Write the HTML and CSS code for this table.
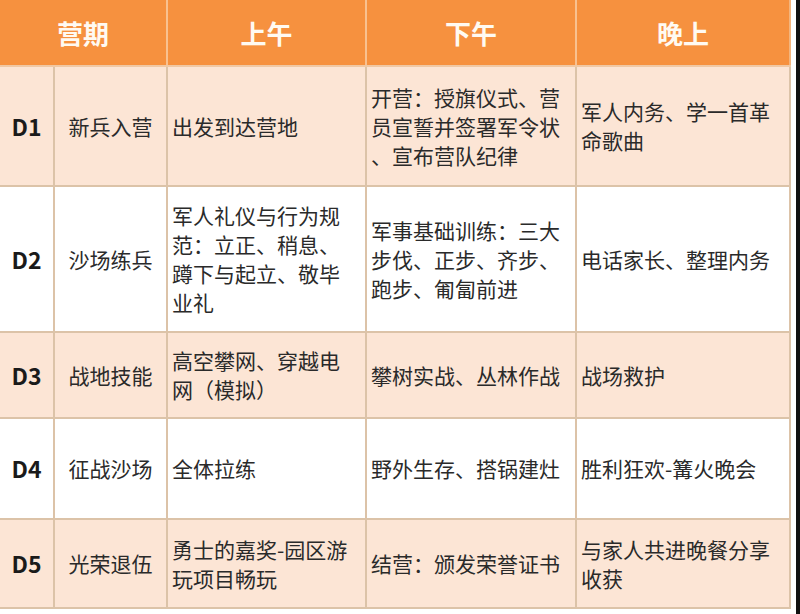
FILE: index.html
```html
<!DOCTYPE html>
<html lang="zh-CN">
<head>
<meta charset="utf-8">
<title>营期安排</title>
<link rel="stylesheet" href="styles.css">
</head>
<body>
<div class="page">
  <table class="schedule">
    <colgroup>
      <col class="c-day"><col class="c-theme"><col class="c-am"><col class="c-pm"><col class="c-eve">
    </colgroup>
    <thead>
      <tr class="head">
        <th colspan="2">营期</th>
        <th>上午</th>
        <th>下午</th>
        <th>晚上</th>
      </tr>
    </thead>
    <tbody>
      <tr class="r1 tint">
        <td class="day">D1</td>
        <td class="theme">新兵入营</td>
        <td>出发到达营地</td>
        <td>开营：授旗仪式、营员宣誓并签署军令状、宣布营队纪律</td>
        <td>军人内务、学一首革命歌曲</td>
      </tr>
      <tr class="r2">
        <td class="day">D2</td>
        <td class="theme">沙场练兵</td>
        <td>军人礼仪与行为规范：立正、稍息、蹲下与起立、敬毕业礼</td>
        <td>军事基础训练：三大步伐、正步、齐步、跑步、匍匐前进</td>
        <td>电话家长、整理内务</td>
      </tr>
      <tr class="r3 tint">
        <td class="day">D3</td>
        <td class="theme">战地技能</td>
        <td>高空攀网、穿越电网（模拟）</td>
        <td>攀树实战、丛林作战</td>
        <td>战场救护</td>
      </tr>
      <tr class="r4">
        <td class="day">D4</td>
        <td class="theme">征战沙场</td>
        <td>全体拉练</td>
        <td>野外生存、搭锅建灶</td>
        <td>胜利狂欢-篝火晚会</td>
      </tr>
      <tr class="r5 tint">
        <td class="day">D5</td>
        <td class="theme">光荣退伍</td>
        <td>勇士的嘉奖-园区游玩项目畅玩</td>
        <td>结营：颁发荣誉证书</td>
        <td>与家人共进晚餐分享收获</td>
      </tr>
    </tbody>
  </table>
  <div class="edge"></div>
</div>
</body>
</html>
```
FILE: styles.css
```css
html, body {
  margin: 0;
  padding: 0;
  background: #ffffff;
}

.page {
  width: 800px;
  height: 614px;
  display: flex;
  justify-content: space-between;
  align-items: flex-start;
  overflow: hidden;
}

.schedule {
  width: 790px;
  border-collapse: collapse;
  table-layout: fixed;
  font-family: "Noto Sans CJK SC", "Noto Sans", sans-serif;
  color: #2a2a2a;
}

.c-day { width: 54px; }
.c-theme { width: 113px; }
.c-am { width: 199px; }
.c-pm { width: 210px; }
.c-eve { width: 214px; }

.head {
  height: 66px;
  background: #f6913f;
}

.head th {
  color: #fffaf2;
  font-size: 26px;
  font-weight: 700;
  border-left: 2px solid #f9c190;
  border-right: 2px solid #f9c190;
  border-bottom: 2px solid #f0c8a4;
  padding: 0;
  line-height: 30px;
}

.head th:first-child { border-left: none; }
.head th:last-child { border-right: 2px solid #f3b57e; }

tbody tr { background: #ffffff; }
tbody tr.tint { background: #fce5d5; }

.r1 { height: 120px; }
.r2 { height: 146px; }
.r3 { height: 86px; }
.r4 { height: 101px; }
.r5 { height: 89px; }

td {
  border: 2px solid #dcc3a8;
  font-size: 21px;
  line-height: 29px;
  padding: 0 6px 0 4px;
  vertical-align: middle;
  text-align: left;
  word-break: break-all;
  line-break: anywhere;
}

tbody tr td:first-child { border-left: none; }

td.day {
  text-align: center;
  font-weight: 700;
  font-size: 23px;
  padding: 0;
  color: #1a1a1a;
}

td.theme {
  text-align: center;
  padding: 0;
}

.edge {
  width: 4px;
  height: 614px;
  background: #111111;
}
```
